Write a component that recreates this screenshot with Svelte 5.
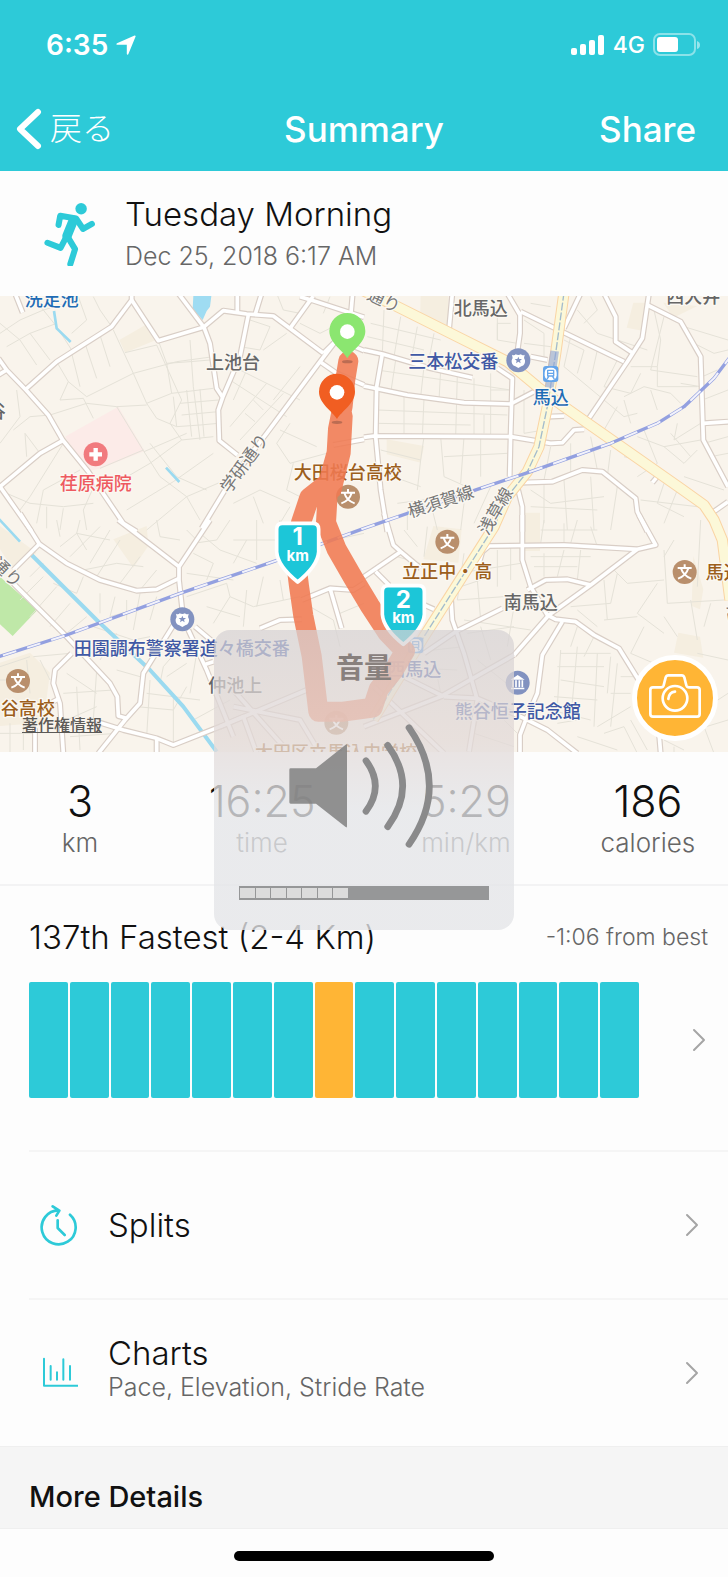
<script lang="ts">
	type Sheet = { x: number; y: number; roads: string[]; streets: string[] };

	const stats = [
		{ value: "3", unit: "km" },
		{ value: "16:25", unit: "time" },
		{ value: "5:29", unit: "min/km" },
		{ value: "186", unit: "calories" }
	];

	const runs = Array.from({ length: 15 }, (_, i) => ({ current: i === 7 }));
	const volume = 7;
	const volumeSteps = 16;

	// map tiles, each in its own coordinates
	const sheets: Sheet[] = [
		{
			x: 0,
			y: -18,
			roads: [
				"M395 0V30L335 110 170 215 75 300",
				"M395 30L475 152 610 112 670 62 740 72 820 78 970 190",
				"M535 10L612 112 630 160 650 295 668 322",
				"M785 10L765 75M712 10V65",
				"M745 75L720 200 668 322 655 360 658 452 712 495",
				"M870 115L940 18M900 20L940 32 1092 82",
				"M1040 110L960 215 800 430 690 575 605 715",
				"M970 190L1010 150M960 215L1010 250 1092 285",
				"M-5 205L20 240 78 300 145 375 188 450 265 545 370 700 410 725",
				"M20 240L-5 255M188 452L120 490 0 590L95 725",
				"M45 10L68 68M1000 465L1092 448M1058 10L1052 80M1040 160L1092 182"
			],
			streets: [
				"M90 20L130 60 170 110 215 180M0 130L60 90 130 60 230 30M20 170L90 130 170 100",
				"M110 225L60 150 0 100M150 210L90 130M235 20L260 90 215 130M280 20L300 60 335 110",
				"M170 215L205 275 260 320 400 250 530 215 640 200M215 190L240 290M255 160L290 265M300 135L330 230M340 120L400 250",
				"M375 188L470 165 545 330 510 400 545 450 640 440M400 250L440 340 515 310 640 295M440 340L470 385 530 410",
				"M475 152L500 220 515 310M570 150L580 290 600 450M500 220L570 215 630 210M520 320L530 410 600 405 655 400",
				"M540 340L655 330M545 375L655 365M560 300L575 440M600 298L612 440",
				"M150 375L260 340 350 350 440 345M205 275L180 330 250 325 280 385M350 350L432 485 560 430M432 485L480 560 560 620 600 690",
				"M300 535L430 480M330 590L450 520 545 450M380 660L520 575 640 490M440 720L560 620 700 560",
				"M450 460L530 560 620 600M190 460L140 540 90 620 60 660M240 540L130 600 110 700M290 570L250 660 260 720",
				"M20 610L90 640 190 650 280 640M140 650V715M190 655L180 720M40 420L90 380 150 375M0 460L60 380 50 300M80 500L75 430 120 490",
				"M750 90L810 110 780 180 720 170M790 180L860 130M700 230L900 330M690 270L860 380M740 240L700 330M800 280L690 410M850 310L720 450",
				"M760 330L790 360M735 370L765 395M900 230L820 330M870 400L830 460 870 520 980 490M840 420L950 470M880 520L860 600 900 620M870 640L780 600 700 640",
				"M870 650L840 700M760 620L790 700M900 100L960 130 1000 110M990 20L970 70M830 10L850 60 900 70"
			]
		},
		{
			x: 1092,
			y: -18,
			roads: [
				"M0 180L55 192 200 235 325 263",
				"M55 192L38 290 35 440 50 600 70 725",
				"M0 288L130 315 300 338 440 342 520 300",
				"M400 235L445 265 440 430 437 560",
				"M0 442L30 438 440 440 560 460 595 458 630 420 660 418",
				"M265 10L255 120M430 10L468 75 468 130 458 200M470 65L780 215",
				"M500 200L550 210M650 10L600 115M550 380L600 378",
				"M720 10L755 80V155L805 188",
				"M855 10L835 145 790 215 668 395",
				"M850 45L950 95 1010 200 1018 450 1092 590",
				"M1018 400L1092 395M865 578L880 560M1092 635L1045 668",
				"M468 578L565 575 655 540 715 545 815 625 820 665 850 725",
				"M460 590L475 650V725"
			],
			streets: [
				"M60 60L55 190M110 80L90 200M160 110L140 220M210 130L190 235M20 100L230 150M10 140L180 180",
				"M95 210L80 310M180 230L170 320M230 240L225 330M280 255L275 440M330 265L330 440M380 250V440M40 240L440 300",
				"M40 360L430 375M40 400L320 405M120 320V440M180 325L175 440M380 300H440M360 375V430",
				"M50 480L170 510 180 440M60 550L170 590M170 510L160 600M230 440L240 560M300 440L290 580M350 445V560M240 500L430 490",
				"M240 560L330 600M100 640L250 620M130 660V720M200 640L220 720M300 640L290 720M380 590L330 700M400 60L400 150M440 100H400V150L460 160",
				"M480 90L540 130 540 200M500 40L560 50M480 160L560 170M620 140L600 230 720 330M640 60L700 130 850 180M680 20L700 60 660 100",
				"M600 150L660 180 640 250M700 180L680 270M760 210L720 290 800 310 830 250M870 60L890 150 880 230M900 80L860 240 1000 260",
				"M800 230L880 230 880 290 1000 290M780 320L840 290 920 310 950 340M720 330L780 380 820 370M760 350L720 420M800 400L780 330M860 300L880 360",
				"M950 280L1010 290M960 110L1092 150M990 160L1050 190 1092 180M1015 260L1060 240M1015 330L1092 300M1020 460L1092 440M1040 500L1092 490",
				"M820 440L900 470 1010 450M780 500L860 520M840 420L880 520 820 560M900 470L960 520 1000 480M940 400L930 450 1010 400M920 430L980 500",
				"M560 470L540 570M620 460V560M680 440L700 540M740 480L730 560M500 600L560 640 720 620M540 580V700M600 570L610 720M680 560L690 720",
				"M500 650L700 660M760 590L740 720M900 580L880 640 960 680M940 600L900 700M830 630L1000 650M960 560L1080 600M480 300L480 430 540 420"
			]
		},
		{
			x: 0,
			y: 672,
			roads: [
				"M60 -20L118 72 200 130 300 180 410 212 470 208 537 175",
				"M118 72L40 150M40 190L200 350 330 490 352 530 355 588 380 595",
				"M355 0L537 140M630 0L537 140V180L547 270",
				"M530 300L430 460 420 550 375 600 295 700",
				"M215 400L165 450 160 490 180 550 190 700",
				"M150 550L178 535M105 700V625M470 655V700",
				"M290 605L370 630 470 655 520 675 660 620 920 510",
				"M565 330L620 450 700 650M585 320L650 375M610 435L640 425",
				"M660 620L730 590 770 700M780 325L840 300 905 298",
				"M905 240L990 205 1060 210 1092 190M990 205L1025 325",
				"M700 510L860 690M700 560L900 600 960 700"
			],
			streets: [
				"M170 0L180 50M240 0L230 40 260 90M300 20L210 110M360 60L290 170M420 110L360 190M330 30L270 130M470 150L420 210",
				"M180 80L230 40 330 60M250 150L350 130 430 140M540 60L480 50 470 0M580 70L650 60 690 0M600 40L660 90 770 130",
				"M770 0V120M840 0L830 60 700 60M580 100L640 130 620 180M560 160L700 180M700 130L740 60M560 230L680 190 690 230 640 310",
				"M690 230L760 260 900 230M740 210L730 320M790 170L770 260M840 180L850 240M620 260L720 290M560 30L590 60",
				"M130 170L60 240M170 200L90 290M210 250L150 320M260 290L200 340M130 130L90 170M250 170L230 220 160 190",
				"M345 230L330 290 400 270M300 220V280M380 240V300M420 220L400 330M470 230L450 300M350 340L300 420M280 320L400 360 450 350",
				"M0 440L90 410M0 480H20M100 410L210 400M80 420L90 520M0 640L100 640M30 610V700M70 600V690M120 420L150 480M200 460L290 520M190 520L340 510",
				"M200 600L290 560M210 650L350 640M230 500L240 690M290 450L280 600M350 450L420 470M410 560L520 570 560 500M450 480L440 650M520 530V670",
				"M440 520L600 540M560 430L500 470M550 370L490 440 480 490M590 400L570 520M580 600L690 540M930 260L1000 300 1020 380M1000 60L1092 40M1020 280L1092 250"
			]
		},
		{
			x: 1092,
			y: 672,
			roads: [
				"M60 -20L88 75 110 95 170 145M0 170L110 95M35 155L75 195M170 250L210 268",
				"M345 130L355 95 375 78 600 75 820 88 875 75 825 -15",
				"M475 -15V120L500 200 550 285 575 298 635 305 690 345 765 385 830 490",
				"M820 88L680 195 555 285 450 405",
				"M415 265L275 335 180 400M490 210L545 180 610 178 680 195",
				"M260 220L265 300 300 400 340 540 315 695",
				"M595 305L535 405 520 520 485 600 468 645V700",
				"M450 405L230 530 0 620M240 530L340 535 470 590 550 630 640 700",
				"M885 640L890 700M30 500L240 700M100 460L240 530"
			],
			streets: [
				"M190 20L180 110M120 30L160 80M100 110L200 140M260 210L350 180M300 100L280 240 420 230M340 180L350 300M400 90V200M440 80V180M280 160L470 130",
				"M540 0L530 70M600 10V70M640 0L620 70M530 30H700M680 20L700 80 780 80M540 100V170M600 90L580 170M650 90L640 180M500 110H680M510 140H640",
				"M740 140L790 190 900 180M720 180L730 300M760 160L740 250 620 260M900 90L910 250 1080 240M880 190L820 280 900 340M1010 0L1000 200M930 60L900 110",
				"M980 240L1000 360M1040 250L1020 320M720 300L820 290M640 270L700 320M840 320L800 400 870 430M900 290L940 350M1000 400L1092 420M1010 440L1000 560",
				"M590 390L580 560M640 380L620 600M700 400L690 620M740 410L730 520M590 400H740M580 440H720M590 480L720 500M570 530L700 540M560 570L680 600",
				"M760 430L740 620M770 470H830M740 520H800M700 620L800 560M640 650L760 690M580 610L640 600M720 640L780 620 820 700M800 600L850 690",
				"M350 320L380 420M310 340L450 320M300 300L500 330M450 260L430 380M640 320L620 380M690 350L660 410M340 420L440 500M380 560L460 640M350 560L330 640 450 680",
				"M900 660L960 690M960 640L1092 600M1000 580L1092 520M1020 620L1050 700M930 680V700M210 420L230 520M120 400L300 380M60 440L280 450"
			]
		}
	];

	const labels = [
		{ text: "洗足池", x: 155, y: 30, tone: "place" },
		{ text: "上池台", x: 699, y: 218, tone: "area" },
		{ text: "荏原病院", x: 287, y: 581, tone: "clinic" },
		{ text: "大田桜台高校", x: 1043, y: 548, tone: "school" },
		{ text: "北馬込", x: 1442, y: 56, tone: "area" },
		{ text: "三本松交番", x: 1360, y: 215, tone: "civic" },
		{ text: "馬込", x: 1652, y: 323, tone: "place" },
		{ text: "西大井", x: 2080, y: 20, tone: "area" },
		{ text: "立正中・高", x: 1342, y: 845, tone: "school" },
		{ text: "南馬込", x: 1592, y: 940, tone: "area" },
		{ text: "馬込", x: 2171, y: 848, tone: "school" },
		{ text: "田園調布警察署道々橋交番", x: 545, y: 1076, tone: "civic" },
		{ text: "仲池上", x: 706, y: 1188, tone: "area" },
		{ text: "谷高校", x: 83, y: 1258, tone: "school" },
		{ text: "西馬込", x: 1243, y: 1140, tone: "civic" },
		{ text: "熊谷恒子記念館", x: 1553, y: 1266, tone: "civic" },
		{ text: "大田区立馬込中学校", x: 1008, y: 1388, tone: "school" },
		{ text: "谷", x: -10, y: 366, tone: "area" }
	];

	const lineLabels = [
		{ text: "通り", x: 1144, y: 30, turn: 25 },
		{ text: "学研通り", x: 748, y: 512, turn: -54 },
		{ text: "横須賀線", x: 1328, y: 634, turn: -18 },
		{ text: "浅草線", x: 1502, y: 654, turn: -60 },
		{ text: "通り", x: 8, y: 842, turn: 44 },
		{ text: "池上", x: 2190, y: 980, turn: 80 }
	];

	const schools = [
		[1044, 602],
		[54, 1155],
		[1342, 737],
		[2054, 828],
		[1009, 1280]
	];
	const police = [
		[1555, 193],
		[547, 970]
	];
	const stations = [
		[1652, 234],
		[1247, 1048]
	];
	const markers = [
		{ km: 1, x: 893, y: 680 },
		{ km: 2, x: 1210, y: 867 }
	];
	const pins = [
		{ color: "#8be670", x: 1042, y: 107 },
		{ color: "#f15e22", x: 1011, y: 289 }
	];

	const railway =
		"M2200 170L2142 247 2052 332 1972 382 1832 442 1592 527 1432 580 1092 697 820 797 540 892 200 1017 -10 1084";
	const highways = [
		"M1060 -30L1182 27 1392 132 1522 197 1612 272 1692 332 1842 437 2042 577 2112 627 2142 672 2167 732 2190 912",
		"M1692 -10L1667 172 1642 332 1617 452 1582 527 1522 602 1482 692 1272 1022 1120 1270"
	];
	const route =
		"M1045 195L1036 250 1028 330 1014 400 1010 470 985 560 928 605 903 680 885 775 897 870 910 960 935 1080 955 1247 1030 1247 1118 1235 1136 1180 1180 1125 1215 1065 1162 1010 1110 930 1062 850 1010 760 978 680 985 560M1028 360L1022 470 995 580";
</script>

{#snippet chevron()}
	<svg class="chevron" viewBox="0 0 14 24" aria-hidden="true">
		<path d="M2 2l10 10L2 22" />
	</svg>
{/snippet}

<div class="screen">
	<header>
		<div class="status">
			<span class="clock">6:35</span>
			<svg class="locate" viewBox="0 0 20 20" aria-hidden="true">
				<path d="M18.6.5a.8.8 0 0 1 1 1l-7.200 17.600c-.4.900-1.600.700-1.600-.3V9.800H1.400C.3 9.800.1 8.600 1 8.200z" />
			</svg>
			<svg class="signal" viewBox="0 0 34 20" aria-hidden="true">
				<rect x="0" y="13" width="6" height="7" rx="2" />
				<rect x="9" y="9" width="6" height="11" rx="2" />
				<rect x="18" y="5" width="6" height="15" rx="2" />
				<rect x="27" y="0" width="6" height="20" rx="2" />
			</svg>
			<span class="network">4G</span>
			<svg class="battery" viewBox="0 0 48 24" aria-hidden="true">
				<rect x="1" y="1" width="41" height="21" rx="6" fill="none" stroke="#fff" stroke-opacity=".45" stroke-width="2" />
				<rect x="4" y="4" width="21" height="15" rx="3" />
				<path d="M44 8q3 1 3 4t-3 4z" opacity=".5" />
			</svg>
		</div>
		<nav>
			<button class="back">
				<svg viewBox="0 0 26 42" aria-hidden="true"><path d="M22 4L4 21l18 17" /></svg>
				<span>戻る</span>
			</button>
			<h1>Summary</h1>
			<button class="share">Share</button>
		</nav>
	</header>

	<section class="workout">
		<svg class="runner" viewBox="0 0 160 190" aria-hidden="true">
			<circle cx="113" cy="20" r="17" />
			<path class="limb" d="M46 68L51 41 98 49 119 80 145 65" />
			<path class="torso" d="M90 54L71 101" />
			<path class="limb" d="M71 100L52 136 13 121M71 100L95 140 81 184" />
		</svg>
		<div>
			<h2>Tuesday Morning</h2>
			<p>Dec 25, 2018 6:17 AM</p>
		</div>
	</section>

	<section class="map">
		<svg class="canvas" viewBox="0 0 2184 1368" preserveAspectRatio="xMidYMid slice" role="img" aria-label="Route">
			<g class="land">
				<path d="M358 132L440 85 468 132 375 170zM1262 0H1345V110L1260 80zM1900 20H1940L1930 105 1880 95zM1990 20L2092 30 2020 65zM1160 430L1272 450 1262 500 1160 475zM1300 690L1385 700 1375 800 1270 790z" />
				<path d="M340 730L440 690 445 750 400 815zM0 690L110 770 40 820 0 760zM0 1100L90 1070 150 1130 130 1280 0 1290zM1565 650H1620V765H1565zM2035 1010L2100 1022 2110 1085 2022 1070zM2080 780L2110 880 2100 940 2075 930z" />
			</g>
			<path fill="#fcebe8" d="M195 422L355 332 434 465 300 518 265 525z" />
			<path fill="#9fdcf2" d="M580 0H634L630 32 620 45 608 72 578 40z" />
			<path fill="#bfe8a8" d="M0 842L112 942 38 1020 0 985z" />

			<g class="streets">
				{#each sheets as sheet}
					<g transform="translate({sheet.x} {sheet.y})">
						{#each sheet.streets as d}<path {d} />{/each}
					</g>
				{/each}
			</g>
			<g class="water">
				<path d="M162 45L170 97 212 138M498 515L538 558M-5 667L60 737" stroke-width="8" />
				<path d="M95 777L290 972 450 1122 550 1232 650 1367" stroke-width="12" />
			</g>
			{#each ["casing", "surface"] as layer}
				<g class={layer}>
					{#each sheets as sheet}
						<g transform="translate({sheet.x} {sheet.y})">
							{#each sheet.roads as d}<path {d} />{/each}
						</g>
					{/each}
				</g>
			{/each}
			{#each highways as d}<path class="highway-edge" {d} />{/each}
			{#each highways as d}<path class="highway" {d} />{/each}
			<path class="subway" d={highways[1]} />
			<path stroke="#8ea3d8" stroke-opacity=".6" stroke-width="26" d="M1664 165L1648 275" />
			<path class="rail" d={railway} />
			<path class="rail-dash" d={railway} />

			<g class="names">
				{#each labels as { text, x, y, tone }}
					<text class={tone} {x} {y}>{text}</text>
				{/each}
				{#each lineLabels as { text, x, y, turn }}
					<text class="line-name" transform="translate({x} {y}) rotate({turn})">{text}</text>
				{/each}
			</g>

			<g transform="translate(287 475)">
				<circle r="36" fill="#f17a7e" />
				<path d="M-19 0H19M0-19V19" stroke="#fff" stroke-width="13" />
			</g>
			{#each schools as [x, y]}
				<g transform="translate({x} {y})">
					<circle r="36" fill="#b98f6c" />
					<path class="glyph" d="M0-23V-13M-21-12H21M-11-11Q-4 12 20 20M11-11Q4 12-20 20" />
				</g>
			{/each}
			{#each police as [x, y]}
				<g transform="translate({x} {y})">
					<circle r="36" fill="#8292c0" />
					<path fill="#fff" d="M-19-17Q-12-13-8-18Q0-14 8-18Q12-13 19-17Q15-7 20 0Q22 14 9 18L0 23-9 18Q-22 14-20 0Q-15-7-19-17z" />
					<path fill="#8292c0" d="M0-11l3 7h8l-6 5 2 8-7-5-7 5 2-8-6-5h8z" />
				</g>
			{/each}
			{#each stations as [x, y]}
				<g transform="translate({x} {y})">
					<rect x="-23" y="-24" width="46" height="48" rx="9" fill="#65a5ea" />
					<rect x="-18" y="-19" width="36" height="38" rx="15" fill="#fff" />
					<path fill="none" stroke="#65a5ea" stroke-width="4" d="M-9-11H9V6H-9zM-9-2H9M-6 8L-11 15M6 8L11 15" />
				</g>
			{/each}
			<g transform="translate(1553 1160)">
				<circle r="36" fill="#8292c0" />
				<path fill="#fff" d="M-21-9L0-23 21-9zM-20 15H20V20H-20z" />
				<path stroke="#fff" stroke-width="5" d="M-14-7V14M-5-7V14M5-7V14M14-7V14" />
			</g>

			<path class="route" d={route} />
			{#each pins as { color, x, y }}
				<g transform="translate({x} {y})">
					<ellipse cy="90" rx="16" ry="5" fill="#7a4a3c" opacity=".45" />
					<path fill={color} d="M0 80C-14 56-54 34-54-2A54 54 0 0 1 54-2C54 34 14 56 0 80z" />
					<circle r="22" fill="#fff" />
				</g>
			{/each}
			{#each markers as { km, x, y }}
				<g transform="translate({x} {y})">
					<path class="shield" d="M-46 2H46Q63 2 63 20V88Q60 130 0 178Q-60 130-63 88V20Q-63 2-46 2z" />
					<text class="km" y="68">{km}</text>
					<text class="km-unit" y="114">km</text>
				</g>
			{/each}
		</svg>
		<a class="legal" href="#legal">著作権情報</a>
		<button class="camera" aria-label="Add photo">
			<svg viewBox="0 0 156 132" aria-hidden="true">
				<path d="M12 40H36Q42 40 44 34L50 10Q52 4 58 4H98Q104 4 106 10L112 34Q114 40 120 40H144Q152 40 152 48V120Q152 128 144 128H12Q4 128 4 120V48Q4 40 12 40z" />
				<circle cx="78" cy="73" r="37" />
				<path d="M58 75Q60 55 78 53" />
			</svg>
		</button>
	</section>

	<section class="stats">
		{#each stats as { value, unit }}
			<div>
				<strong>{value}</strong>
				<span>{unit}</span>
			</div>
		{/each}
	</section>

	<section class="ranking">
		<div class="ranking-head">
			<h2>137th Fastest (2-4 Km)</h2>
			<span>-1:06 from best</span>
		</div>
		<a class="ranking-body" href="#ranking" aria-label="Compare runs">
			<span class="bars">
				{#each runs as run}
					<span class="bar" class:current={run.current}></span>
				{/each}
			</span>
			{@render chevron()}
		</a>
	</section>

	<a class="row" href="#splits">
		<svg class="row-icon" viewBox="0 0 120 126" aria-hidden="true">
			<path d="M96 32A51 51 0 1 1 62 19M44 7L64 20 55 35M59 49V72L80 93" />
		</svg>
		<span class="row-text"><span class="row-title">Splits</span></span>
		{@render chevron()}
	</a>
	<a class="row" href="#charts">
		<svg class="row-icon thin" viewBox="0 0 120 126" aria-hidden="true">
			<path d="M18 20V101H119M38 42V83M57 61V83M76 22V83M96 42V83" />
		</svg>
		<span class="row-text">
			<span class="row-title">Charts</span>
			<span class="row-note">Pace, Elevation, Stride Rate</span>
		</span>
		{@render chevron()}
	</a>

	<h3>More Details</h3>
	<div class="home"><span></span></div>

	<div class="hud">
		<p>音量</p>
		<svg viewBox="264 312 456 372" aria-hidden="true">
			<path class="speaker" d="M272 445H348L437 374Q441 371 441 376V619Q441 624 437 621L348 551H272Q268 551 268 547V449Q268 445 272 445z" />
			<path class="wave" d="M498 422Q554 498 498 574M563 376Q653 498 563 620M627 323Q749 498 627 673" />
		</svg>
		<div class="level" role="meter" aria-label="音量" aria-valuemin="0" aria-valuemax={volumeSteps} aria-valuenow={volume}>
			{#each { length: volumeSteps } as _, i}
				<span class:on={i < volume}></span>
			{/each}
		</div>
	</div>
</div>

<style>
	:global(body) {
		margin: 0;
		background: #fdfdfd;
	}

	.screen {
		position: relative;
		font-family: Inter, "Noto Sans CJK JP", sans-serif;
		font-weight: 300;
		color: #111;
	}

	h1,
	h2,
	h3,
	p {
		margin: 0;
		font-weight: inherit;
	}

	button {
		padding: 0;
		border: 0;
		background: none;
		font: inherit;
		color: inherit;
		cursor: pointer;
	}

	a {
		color: inherit;
		text-decoration: none;
	}

	header {
		background: #2dcad8;
		color: #fff;
	}

	.status {
		display: flex;
		align-items: center;
		box-sizing: border-box;
		height: 86px;
		padding: 4px 27px 0 46px;
	}

	.status svg {
		fill: #fff;
	}

	.clock {
		font-size: 28px;
		font-weight: 600;
	}

	.locate {
		width: 20px;
		height: 20px;
		margin: 0 auto 0 8px;
	}

	.signal {
		width: 34px;
		height: 20px;
	}

	.network {
		margin: 0 8px;
		font-size: 23px;
		font-weight: 500;
	}

	.battery {
		width: 48px;
		height: 24px;
	}

	nav {
		display: grid;
		grid-template-columns: 1fr auto 1fr;
		align-items: center;
		height: 85px;
		padding: 0 32px 0 16px;
	}

	nav h1,
	.share {
		font-size: 35px;
		font-weight: 500;
	}

	nav h1 {
		padding-left: 16px;
	}

	.share {
		justify-self: end;
	}

	.back {
		display: flex;
		align-items: center;
		gap: 8px;
		font-size: 32px;
	}

	.back span {
		padding-bottom: 6px;
	}

	.back svg {
		width: 26px;
		height: 42px;
		fill: none;
		stroke: #fff;
		stroke-width: 6;
		stroke-linecap: round;
		stroke-linejoin: round;
	}

	.workout {
		display: flex;
		align-items: center;
		gap: 28px;
		height: 125px;
		padding-left: 43px;
	}

	.runner {
		width: 54px;
		height: 64px;
		fill: #2dcad8;
	}

	.limb,
	.torso {
		fill: none;
		stroke: #2dcad8;
		stroke-width: 18;
		stroke-linecap: round;
		stroke-linejoin: round;
	}

	.torso {
		stroke-width: 28;
	}

	h2,
	.row-title {
		font-size: 33px;
		line-height: 44px;
	}

	.workout p {
		font-size: 25px;
		line-height: 40px;
		color: #666;
	}

	.map {
		position: relative;
		height: 456px;
		overflow: hidden;
		background: #f9f4ec;
	}

	.canvas {
		display: block;
		width: 100%;
		height: 100%;
		stroke-linejoin: round;
	}

	.land {
		fill: #f5eee0;
	}

	.streets,
	.water,
	.casing,
	.surface,
	.rail,
	.rail-dash,
	.highway,
	.highway-edge,
	.subway {
		fill: none;
	}

	.streets {
		stroke: #e5e2d8;
		stroke-width: 3;
	}

	.water {
		stroke: #9bdaf0;
	}

	.casing {
		stroke: #d9cec6;
		stroke-width: 18;
	}

	.surface {
		stroke: #fff;
		stroke-width: 11;
	}

	.highway-edge {
		stroke: #fad4a4;
		stroke-width: 34;
	}

	.highway {
		stroke: #fcf8d8;
		stroke-width: 28;
	}

	.subway {
		stroke: #a3bccc;
		stroke-width: 4;
		stroke-dasharray: 24 6;
	}

	.rail {
		stroke: #93a0e0;
		stroke-width: 10;
	}

	.rail-dash {
		stroke: #f2f2fb;
		stroke-width: 6;
		stroke-dasharray: 42 34;
	}

	.names text {
		font-size: 54px;
		font-weight: 500;
		text-anchor: middle;
		paint-order: stroke;
		stroke: #fbf8f2;
		stroke-width: 8px;
	}

	.area {
		fill: #666;
	}

	.place {
		fill: #1f6cb5;
	}

	.clinic {
		fill: #ee5a60;
	}

	.school {
		fill: #9c5e1c;
	}

	.civic {
		fill: #4059a5;
	}

	.names .line-name {
		font-size: 51px;
		font-weight: 400;
		fill: #777;
	}

	.glyph {
		fill: none;
		stroke: #fff;
		stroke-width: 6;
	}

	.route {
		fill: none;
		stroke: #f07a52;
		stroke-width: 60;
		stroke-linecap: round;
		opacity: 0.88;
	}

	.shield {
		fill: #1cc6d8;
		stroke: #fff;
		stroke-width: 11;
	}

	.km,
	.km-unit {
		font-weight: 700;
		fill: #fff;
		text-anchor: middle;
	}

	.km {
		font-size: 72px;
	}

	.km-unit {
		font-size: 45px;
	}

	.legal {
		position: absolute;
		left: 22px;
		bottom: 15px;
		font-size: 16px;
		line-height: 24px;
		font-weight: 500;
		color: #5c5a57;
		text-decoration: underline;
	}

	.camera {
		position: absolute;
		right: 10px;
		bottom: 11px;
		display: grid;
		place-items: center;
		width: 86px;
		height: 86px;
		border: 5px solid #fff;
		border-radius: 50%;
		background: #ffb535;
	}

	.camera svg {
		width: 52px;
		height: 44px;
		margin-bottom: 4px;
		fill: none;
		stroke: #fff;
		stroke-width: 8;
		stroke-linecap: round;
	}

	.stats {
		display: grid;
		grid-template-columns: 22fr 28fr 28fr 22fr;
		padding: 22px 0 26px;
		border-bottom: 2px solid #f3f3f4;
		text-align: center;
	}

	.stats strong,
	.stats span {
		display: block;
	}

	.stats strong {
		font-size: 43px;
		line-height: 54px;
		font-weight: 300;
	}

	.stats span {
		font-size: 26px;
		line-height: 30px;
		color: #666;
	}

	.ranking {
		padding: 29px 20px 0 29px;
	}

	.ranking-head {
		display: flex;
		align-items: center;
		justify-content: space-between;
	}

	.ranking-head span {
		font-size: 23px;
		color: #666;
	}

	.ranking-body {
		display: flex;
		align-items: center;
		justify-content: space-between;
		padding: 23px 0 52px;
	}

	.bars {
		display: flex;
		gap: 2px;
		width: 90%;
		max-width: 610px;
		height: 116px;
	}

	.bar {
		flex: 1;
		border-radius: 2px;
		background: #2dcad8;
	}

	.bar.current {
		background: #ffb535;
	}

	.chevron {
		width: 14px;
		height: 24px;
		margin-right: 2px;
		fill: none;
		stroke: #a5a5a5;
		stroke-width: 2;
		stroke-linecap: round;
		stroke-linejoin: round;
	}

	.row {
		display: flex;
		align-items: center;
		height: 146px;
		margin-left: 29px;
		padding-right: 27px;
		border-top: 2px solid #f5f5f5;
	}

	.row-icon {
		width: 40px;
		height: 42px;
		margin: 0 30px 0 9px;
		fill: none;
		stroke: #2dcad8;
		stroke-width: 8;
		stroke-linecap: round;
		stroke-linejoin: round;
	}

	.row-icon.thin {
		stroke-width: 6;
	}

	.row-text {
		flex: 1;
	}

	.row-title,
	.row-note {
		display: block;
	}

	.row-title {
		line-height: 36px;
	}

	.row-note {
		padding-bottom: 8px;
		font-size: 25px;
		line-height: 32px;
		color: #666;
	}

	h3 {
		padding: 31px 29px 12px;
		border: solid #efefef;
		border-width: 1px 0;
		background: #f5f5f5;
		font-size: 29px;
		line-height: 38px;
		font-weight: 500;
	}

	.home {
		display: flex;
		justify-content: center;
		padding: 22px 0 16px;
	}

	.home span {
		width: 260px;
		height: 10px;
		border-radius: 5px;
		background: #000;
	}

	.hud {
		position: absolute;
		top: 630px;
		left: calc(50% - 150px);
		display: flex;
		flex-direction: column;
		align-items: center;
		box-sizing: border-box;
		width: 300px;
		height: 300px;
		padding-top: 20px;
		border-radius: 16px;
		background: linear-gradient(rgba(214, 210, 212, 0.72), rgba(226, 217, 215, 0.75) 36%, rgba(228, 229, 232, 0.78) 60%);
	}

	.hud p {
		font-size: 28px;
		line-height: 36px;
		font-weight: 700;
		color: #88807d;
	}

	.hud svg {
		width: 152px;
		height: 124px;
		margin: 38px 0;
	}

	.speaker {
		fill: #808080;
		fill-opacity: 0.85;
	}

	.wave {
		fill: none;
		stroke: #8a8a8b;
		stroke-width: 20;
		stroke-linecap: round;
	}

	.level {
		display: grid;
		grid-template-columns: repeat(16, 1fr);
		gap: 1px;
		box-sizing: border-box;
		width: 250px;
		height: 14px;
		padding: 2px 1px;
		background: #969798;
	}

	.level .on {
		background: #dcdcdc;
	}
</style>
